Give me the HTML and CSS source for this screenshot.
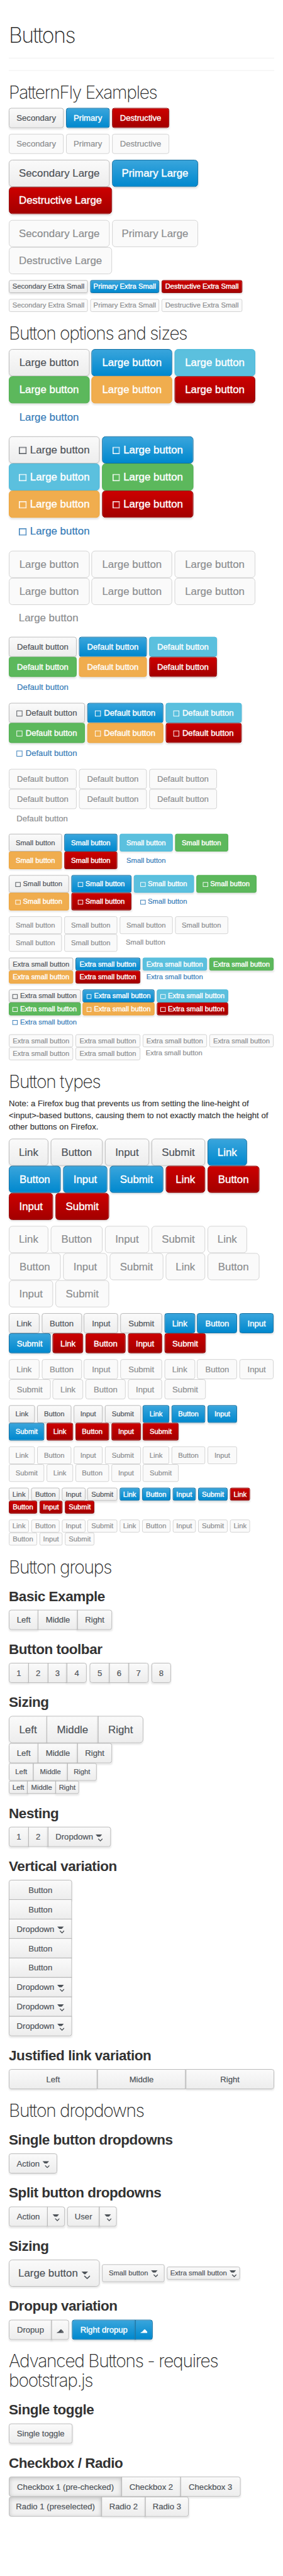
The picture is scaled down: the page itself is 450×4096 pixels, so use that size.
FILE: index.html
```html
<!DOCTYPE html>
<html lang="en">
<head>
<meta charset="utf-8">
<title>Buttons</title>
<link rel="stylesheet" href="styles.css">
</head>
<body>
<svg class="defs" aria-hidden="true">
  <symbol id="caret" viewBox="0 0 12 12"><path d="M0 0H11.3L7.8 4H3.5Z" fill="currentColor"/><path d="M4.6 7.4L8.2 11L11.8 7.4" fill="none" stroke="currentColor" stroke-width="1.4"/></symbol>
  <symbol id="caret-lg" viewBox="0 0 15 13"><path d="M0 0H11.5L6.6 5H5Z" fill="currentColor"/><path d="M5 7.6L9.8 12.2L14.6 7.6" fill="none" stroke="currentColor" stroke-width="1.8"/></symbol>
  <symbol id="caret-up" viewBox="0 0 12 7"><path d="M0 6.5L1 5.2L3.3 4.3L6.5 .6L8 .3L11.8 4.6V6.5Z" fill="currentColor"/><path d="M7.2 2.2L10.6 5.4" stroke="#fff" stroke-opacity=".55" stroke-width=".7"/></symbol>
</svg>
<div class="viewport"><main class="page">
<header class="page-header"><h1>Buttons</h1></header>
<hr>
<h2>PatternFly Examples</h2>
<div class="row md"><a class="btn w-sec">Secondary</a><a class="btn primary w-pri">Primary</a><a class="btn danger w-des">Destructive</a></div>
<div class="row md off"><a class="btn w-sec">Secondary</a><a class="btn w-pri">Primary</a><a class="btn w-des">Destructive</a></div>
<div class="row lg"><a class="btn w-sec">Secondary Large</a><a class="btn primary w-pri">Primary Large</a><a class="btn danger w-des">Destructive Large</a></div>
<div class="row lg off"><a class="btn w-sec">Secondary Large</a><a class="btn w-pri">Primary Large</a><a class="btn w-des">Destructive Large</a></div>
<div class="row xs"><a class="btn w-sec">Secondary Extra Small</a><a class="btn primary w-pri">Primary Extra Small</a><a class="btn danger w-des">Destructive Extra Small</a></div>
<div class="row xs off"><a class="btn w-sec">Secondary Extra Small</a><a class="btn w-pri">Primary Extra Small</a><a class="btn w-des">Destructive Extra Small</a></div>

<h2>Button options and sizes</h2>
<div class="row lg plain"><a class="btn">Large button</a><a class="btn primary">Large button</a><a class="btn info">Large button</a><a class="btn success">Large button</a><a class="btn warning">Large button</a><a class="btn danger">Large button</a><a class="btn link">Large button</a></div>
<div class="row lg icons"><a class="btn"><i class="sq"></i>Large button</a><a class="btn primary"><i class="sq"></i>Large button</a><a class="btn info"><i class="sq"></i>Large button</a><a class="btn success"><i class="sq"></i>Large button</a><a class="btn warning"><i class="sq"></i>Large button</a><a class="btn danger"><i class="sq"></i>Large button</a><a class="btn link"><i class="sq"></i>Large button</a></div>
<div class="row lg plain off"><a class="btn">Large button</a><a class="btn">Large button</a><a class="btn">Large button</a><a class="btn">Large button</a><a class="btn">Large button</a><a class="btn">Large button</a><a class="btn link">Large button</a></div>
<div class="row md plain"><a class="btn">Default button</a><a class="btn primary">Default button</a><a class="btn info">Default button</a><a class="btn success">Default button</a><a class="btn warning">Default button</a><a class="btn danger">Default button</a><a class="btn link">Default button</a></div>
<div class="row md icons"><a class="btn"><i class="sq"></i>Default button</a><a class="btn primary"><i class="sq"></i>Default button</a><a class="btn info"><i class="sq"></i>Default button</a><a class="btn success"><i class="sq"></i>Default button</a><a class="btn warning"><i class="sq"></i>Default button</a><a class="btn danger"><i class="sq"></i>Default button</a><a class="btn link"><i class="sq"></i>Default button</a></div>
<div class="row md plain off"><a class="btn">Default button</a><a class="btn">Default button</a><a class="btn">Default button</a><a class="btn">Default button</a><a class="btn">Default button</a><a class="btn">Default button</a><a class="btn link">Default button</a></div>
<div class="row sm plain"><a class="btn">Small button</a><a class="btn primary">Small button</a><a class="btn info">Small button</a><a class="btn success">Small button</a><a class="btn warning">Small button</a><a class="btn danger">Small button</a><a class="btn link">Small button</a></div>
<div class="row sm icons"><a class="btn"><i class="sq"></i>Small button</a><a class="btn primary"><i class="sq"></i>Small button</a><a class="btn info"><i class="sq"></i>Small button</a><a class="btn success"><i class="sq"></i>Small button</a><a class="btn warning"><i class="sq"></i>Small button</a><a class="btn danger"><i class="sq"></i>Small button</a><a class="btn link"><i class="sq"></i>Small button</a></div>
<div class="row sm plain off"><a class="btn">Small button</a><a class="btn">Small button</a><a class="btn">Small button</a><a class="btn">Small button</a><a class="btn">Small button</a><a class="btn">Small button</a><a class="btn link">Small button</a></div>
<div class="row xs plain"><a class="btn">Extra small button</a><a class="btn primary">Extra small button</a><a class="btn info">Extra small button</a><a class="btn success">Extra small button</a><a class="btn warning">Extra small button</a><a class="btn danger">Extra small button</a><a class="btn link">Extra small button</a></div>
<div class="row xs icons"><a class="btn"><i class="sq"></i>Extra small button</a><a class="btn primary"><i class="sq"></i>Extra small button</a><a class="btn info"><i class="sq"></i>Extra small button</a><a class="btn success"><i class="sq"></i>Extra small button</a><a class="btn warning"><i class="sq"></i>Extra small button</a><a class="btn danger"><i class="sq"></i>Extra small button</a><a class="btn link"><i class="sq"></i>Extra small button</a></div>
<div class="row xs plain off"><a class="btn">Extra small button</a><a class="btn">Extra small button</a><a class="btn">Extra small button</a><a class="btn">Extra small button</a><a class="btn">Extra small button</a><a class="btn">Extra small button</a><a class="btn link">Extra small button</a></div>

<h2>Button types</h2>
<p class="note">Note: a Firefox bug that prevents us from setting the line-height of<br>&lt;input&gt;-based buttons, causing them to not exactly match the height of<br>other buttons on Firefox.</p>
<div class="row lg"><a class="btn w-l">Link</a><a class="btn w-b">Button</a><a class="btn w-i">Input</a><a class="btn w-s">Submit</a><a class="btn primary w-l">Link</a><a class="btn primary w-b">Button</a><a class="btn primary w-i">Input</a><a class="btn primary w-s">Submit</a><a class="btn danger w-l">Link</a><a class="btn danger w-b">Button</a><a class="btn danger w-i">Input</a><a class="btn danger w-s">Submit</a></div>
<div class="row lg off"><a class="btn w-l">Link</a><a class="btn w-b">Button</a><a class="btn w-i">Input</a><a class="btn w-s">Submit</a><a class="btn w-l">Link</a><a class="btn w-b">Button</a><a class="btn w-i">Input</a><a class="btn w-s">Submit</a><a class="btn w-l">Link</a><a class="btn w-b">Button</a><a class="btn w-i">Input</a><a class="btn w-s">Submit</a></div>
<div class="row md"><a class="btn w-l">Link</a><a class="btn w-b">Button</a><a class="btn w-i">Input</a><a class="btn w-s">Submit</a><a class="btn primary w-l">Link</a><a class="btn primary w-b">Button</a><a class="btn primary w-i">Input</a><a class="btn primary w-s">Submit</a><a class="btn danger w-l">Link</a><a class="btn danger w-b">Button</a><a class="btn danger w-i">Input</a><a class="btn danger w-s">Submit</a></div>
<div class="row md off"><a class="btn w-l">Link</a><a class="btn w-b">Button</a><a class="btn w-i">Input</a><a class="btn w-s">Submit</a><a class="btn w-l">Link</a><a class="btn w-b">Button</a><a class="btn w-i">Input</a><a class="btn w-s">Submit</a><a class="btn w-l">Link</a><a class="btn w-b">Button</a><a class="btn w-i">Input</a><a class="btn w-s">Submit</a></div>
<div class="row sm"><a class="btn w-l">Link</a><a class="btn w-b">Button</a><a class="btn w-i">Input</a><a class="btn w-s">Submit</a><a class="btn primary w-l">Link</a><a class="btn primary w-b">Button</a><a class="btn primary w-i">Input</a><a class="btn primary w-s">Submit</a><a class="btn danger w-l">Link</a><a class="btn danger w-b">Button</a><a class="btn danger w-i">Input</a><a class="btn danger w-s">Submit</a></div>
<div class="row sm off"><a class="btn w-l">Link</a><a class="btn w-b">Button</a><a class="btn w-i">Input</a><a class="btn w-s">Submit</a><a class="btn w-l">Link</a><a class="btn w-b">Button</a><a class="btn w-i">Input</a><a class="btn w-s">Submit</a><a class="btn w-l">Link</a><a class="btn w-b">Button</a><a class="btn w-i">Input</a><a class="btn w-s">Submit</a></div>
<div class="row xs"><a class="btn w-l">Link</a><a class="btn w-b">Button</a><a class="btn w-i">Input</a><a class="btn w-s">Submit</a><a class="btn primary w-l">Link</a><a class="btn primary w-b">Button</a><a class="btn primary w-i">Input</a><a class="btn primary w-s">Submit</a><a class="btn danger w-l">Link</a><a class="btn danger w-b">Button</a><a class="btn danger w-i">Input</a><a class="btn danger w-s">Submit</a></div>
<div class="row xs off"><a class="btn w-l">Link</a><a class="btn w-b">Button</a><a class="btn w-i">Input</a><a class="btn w-s">Submit</a><a class="btn w-l">Link</a><a class="btn w-b">Button</a><a class="btn w-i">Input</a><a class="btn w-s">Submit</a><a class="btn w-l">Link</a><a class="btn w-b">Button</a><a class="btn w-i">Input</a><a class="btn w-s">Submit</a></div>

<h2>Button groups</h2>
<h3>Basic Example</h3>
<div class="group md"><a class="btn w-left">Left</a><a class="btn w-mid">Middle</a><a class="btn w-right">Right</a></div>
<h3>Button toolbar</h3>
<div class="toolbar md"><div class="group"><a class="btn num">1</a><a class="btn num">2</a><a class="btn num">3</a><a class="btn num">4</a></div><div class="group"><a class="btn num">5</a><a class="btn num">6</a><a class="btn num">7</a></div><div class="group"><a class="btn num">8</a></div></div>
<h3>Sizing</h3>
<div class="group lg"><a class="btn w-left">Left</a><a class="btn w-mid">Middle</a><a class="btn w-right">Right</a></div>
<div class="group md"><a class="btn w-left">Left</a><a class="btn w-mid">Middle</a><a class="btn w-right">Right</a></div>
<div class="group sm"><a class="btn w-left">Left</a><a class="btn w-mid">Middle</a><a class="btn w-right">Right</a></div>
<div class="group xs"><a class="btn w-left">Left</a><a class="btn w-mid">Middle</a><a class="btn w-right">Right</a></div>
<h3>Nesting</h3>
<div class="group md"><a class="btn num">1</a><a class="btn num">2</a><a class="btn w-drop">Dropdown<svg class="caret"><use href="#caret"/></svg></a></div>
<h3>Vertical variation</h3>
<div class="vertical md"><a class="btn">Button</a><a class="btn">Button</a><a class="btn">Dropdown<svg class="caret"><use href="#caret"/></svg></a><a class="btn">Button</a><a class="btn">Button</a><a class="btn">Dropdown<svg class="caret"><use href="#caret"/></svg></a><a class="btn">Dropdown<svg class="caret"><use href="#caret"/></svg></a><a class="btn">Dropdown<svg class="caret"><use href="#caret"/></svg></a></div>
<h3>Justified link variation</h3>
<div class="group md justified"><a class="btn">Left</a><a class="btn">Middle</a><a class="btn">Right</a></div>

<h2>Button dropdowns</h2>
<h3>Single button dropdowns</h3>
<div class="group md"><a class="btn w-82">Action<svg class="caret"><use href="#caret"/></svg></a></div>
<h3>Split button dropdowns</h3>
<div class="toolbar split md"><div class="group"><a class="btn w-66">Action</a><a class="btn toggle"><svg class="caret"><use href="#caret"/></svg></a></div><div class="group"><a class="btn w-55">User</a><a class="btn toggle"><svg class="caret"><use href="#caret"/></svg></a></div></div>
<h3>Sizing</h3>
<div class="toolbar split"><div class="group lg"><a class="btn w-154">Large button<svg class="caret"><use href="#caret-lg"/></svg></a></div><div class="group sm"><a class="btn w-106">Small button<svg class="caret"><use href="#caret"/></svg></a></div><div class="group xs"><a class="btn w-124">Extra small button<svg class="caret"><use href="#caret"/></svg></a></div></div>
<h3>Dropup variation</h3>
<div class="toolbar md"><div class="group"><a class="btn w-73">Dropup</a><a class="btn toggle"><svg class="caret up"><use href="#caret-up"/></svg></a></div><div class="group"><a class="btn primary w-108">Right dropup</a><a class="btn primary toggle"><svg class="caret up"><use href="#caret-up"/></svg></a></div></div>

<h2>Advanced Buttons - requires<br>bootstrap.js</h2>
<h3>Single toggle</h3>
<div class="group md"><a class="btn w-108">Single toggle</a></div>
<h3>Checkbox / Radio</h3>
<div class="group md"><a class="btn active w-192">Checkbox 1 (pre-checked)</a><a class="btn w-101">Checkbox 2</a><a class="btn w-102">Checkbox 3</a></div>
<div class="group md"><a class="btn active w-158">Radio 1 (preselected)</a><a class="btn w-75">Radio 2</a><a class="btn w-74">Radio 3</a></div>
</main></div>
</body>
</html>
```
FILE: styles.css
```css
* { box-sizing: border-box; }
html, body { margin: 0; background: #fff; }
.viewport { width: 450px; height: 4096px; overflow: hidden; }
.page {
  width: 480px;
  height: 4368px;
  padding: 40px 15px 0;
  transform: scale(.9376);
  transform-origin: 0 0;
  font: 14px/20px "Liberation Sans", Arial, sans-serif;
  color: #333;
}
.defs { display: none; }

/* headings */
h1, h2 { font-family: Inter, "Open Sans", sans-serif; font-weight: 200; color: #2b2b2b; white-space: nowrap; }
h1 { margin: 0; font-size: 36px; line-height: 39px; letter-spacing: -1.6px; }
h2 { margin: 20px 0 10px; font-size: 30px; line-height: 33px; letter-spacing: -1.35px; }
h3 { margin: 20px 0 10px; font-size: 24px; line-height: 26px; font-weight: 700; letter-spacing: -.5px; }
.page-header { padding-bottom: 19px; margin-bottom: 20px; border-bottom: 1px solid #eee; }
hr { height: 1px; margin: 0 0 20px; border: 0; background: #eee; }
.note { margin: 0 0 10px; white-space: nowrap; -webkit-text-stroke: .15px currentColor; }

/* buttons */
.btn {
  display: inline-flex;
  flex: none;
  align-items: center;
  justify-content: center;
  height: var(--h);
  border: 1px solid #b7b7b7;
  border-radius: var(--r);
  background: linear-gradient(#fafafa, #ededed);
  box-shadow: 0 2px 3px rgba(3, 3, 3, .1);
  color: #4d5258;
  white-space: nowrap;
  -webkit-text-stroke: .2px currentColor;
}
.primary, .info, .success, .warning, .danger { color: #fff; -webkit-text-stroke-width: .4px; }
.primary { background: linear-gradient(#39a5dc, #0088ce); border-color: #00659c; }
.info { background: #5bc0de; border-color: #46b8da; }
.success { background: #5cb85c; border-color: #4cae4c; }
.warning { background: #f0ad4e; border-color: #eea236; }
.danger { background: linear-gradient(#c00, #a30000); border-color: #8b0000; }
.link { background: none; border-color: transparent; box-shadow: none; color: #337ab7; }
.active { background: #f1f1f1; box-shadow: inset 0 2px 8px rgba(3, 3, 3, .2); }
.off .btn { background: #fafafa; border-color: #d1d1d1; box-shadow: none; color: #8b8d8f; }
.off .link { background: none; border-color: transparent; height: calc(var(--h) - 2px); padding-right: 2px; }

/* sizes */
.lg { --h: 46px; --r: 6px; font-size: 18px; }
.md { --h: 34px; --r: 4px; font-size: 14px; }
.sm { --h: 30px; --r: 3px; font-size: 12px; }
.xs { --h: 22px; --r: 3px; font-size: 12px; }

.row { display: flex; flex-wrap: wrap; column-gap: 3.9px; margin-bottom: 10px; width: 450px; }
.lg.plain .btn { width: 136.6px; }
.md.plain .btn { width: 115px; }
.sm.plain .btn { width: 90px; }
.xs.plain .btn { width: 109.4px; }
.lg.icons .btn { width: 154.4px; }
.md.icons .btn { width: 129px; }
.sm.icons .btn { width: 102px; }
.xs.icons .btn { width: 121.5px; }
.md .w-sec { width: 93px; } .md .w-pri { width: 74.2px; } .md .w-des { width: 96.8px; }
.lg .w-sec { width: 171px; } .lg .w-pri { width: 146px; } .lg .w-des { width: 175px; }
.xs .w-sec { width: 134.1px; } .xs .w-pri { width: 117.1px; } .xs .w-des { width: 137px; }
.lg .w-l { width: 67px; } .lg .w-b { width: 88.1px; } .lg .w-i { width: 75px; } .lg .w-s { width: 91.2px; }
.md .w-l { width: 51.7px; } .md .w-b { width: 68px; } .md .w-i { width: 58px; } .md .w-s { width: 70.6px; }
.sm .w-l { width: 44.4px; } .sm .w-b { width: 57.7px; } .sm .w-i { width: 49.4px; } .sm .w-s { width: 60.4px; }
.xs .w-l { width: 34.4px; } .xs .w-b { width: 47.8px; } .xs .w-i { width: 39.6px; } .xs .w-s { width: 50.2px; }

.sq { width: 10px; height: 10px; margin: 2px 5px 0 0; border: 1px solid currentColor; }
.lg .sq { width: 12.6px; height: 12.4px; margin-right: 6px; box-shadow: inset 0 0 0 .6px currentColor; }
.sm .sq, .xs .sq { width: 8.6px; height: 8.6px; margin-right: 4px; }

/* groups */
.group { display: flex; }
.group .btn + .btn { margin-left: -1px; }
.group .btn:not(:first-child) { border-top-left-radius: 0; border-bottom-left-radius: 0; }
.group .btn:not(:last-child) { border-top-right-radius: 0; border-bottom-right-radius: 0; }
.toolbar { display: flex; align-items: center; gap: 5px; }
.split { gap: 4px; }
.num { width: 33.8px; }
.toggle { width: 30px; }
.md .w-left { width: 50.2px; } .md .w-mid { width: 68px; } .md .w-right { width: 59px; }
.lg .w-left { width: 65px; } .lg .w-mid { width: 88px; } .lg .w-right { width: 77px; }
.sm .w-left { width: 42px; } .sm .w-mid { width: 59px; } .sm .w-right { width: 50px; }
.xs .w-left { width: 32px; } .xs .w-mid { width: 49px; } .xs .w-right { width: 40px; }
.w-drop { width: 107.4px; }
.w-55 { width: 55px; } .w-66 { width: 66px; } .w-73 { width: 73.3px; } .w-74 { width: 74px; }
.w-75 { width: 75px; } .w-82 { width: 82px; } .w-101 { width: 101px; } .w-102 { width: 102px; }
.w-106 { width: 106px; } .w-108 { width: 108px; } .w-124 { width: 124px; } .w-154 { width: 154px; }
.w-158 { width: 158px; } .w-192 { width: 192px; }

.vertical { display: flex; flex-direction: column; width: 107px; }
.vertical .btn + .btn { margin-top: -1px; }
.vertical .btn { border-radius: 0; }
.vertical .btn:first-child { border-radius: 4px 4px 0 0; }
.vertical .btn:last-child { border-radius: 0 0 4px 4px; }
.justified .btn { flex: 1; }
.justified .btn + .btn { margin-left: 0; }

.caret { flex: none; width: 12px; height: 12px; margin: 3px 0 0 4.5px; }
.toggle .caret { margin-left: 0; }
.caret.up { height: 7px; margin-top: 4px; }
.lg .caret { width: 15px; height: 13px; margin: 7px 0 0 6px; }
.sm .caret, .xs .caret { margin-top: 1px; }
```
